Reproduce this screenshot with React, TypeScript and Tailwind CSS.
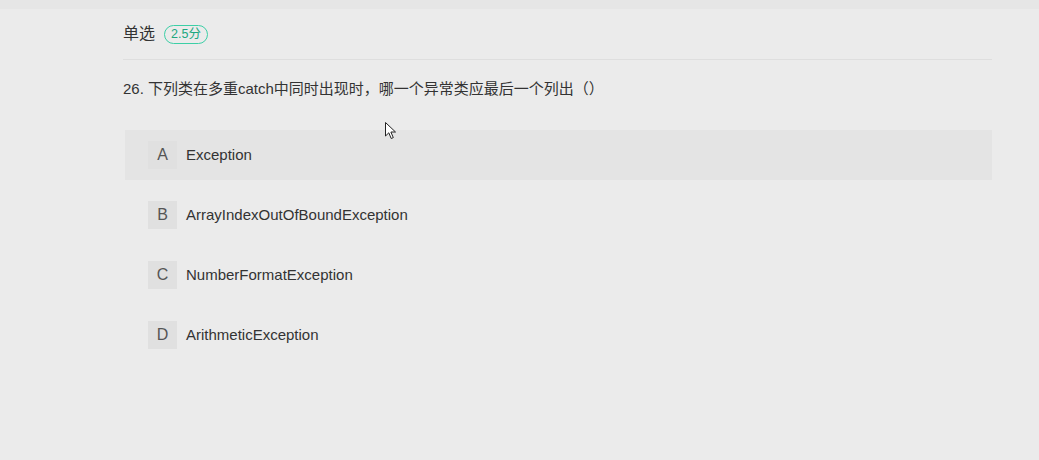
import React from 'react';

const options = [
  { key: 'A', text: 'Exception' },
  { key: 'B', text: 'ArrayIndexOutOfBoundException' },
  { key: 'C', text: 'NumberFormatException' },
  { key: 'D', text: 'ArithmeticException' },
];

const font = { fontFamily: 'Arial, "Liberation Sans", "Noto Sans CJK SC", sans-serif' };

const App: React.FC = () => {
  return (
    <div className="relative w-[1039px] h-[460px] bg-[#ebebeb] overflow-hidden" style={font}>
      {/* top strip */}
      <div className="h-[9px] bg-[#e6e6e6]" />

      <div className="pl-[123px] pr-[47px]">
        {/* header */}
        <div className="flex items-center gap-[9px] h-[51px] border-b border-[#dedede]">
          <span className="text-[16px] text-[#333]">单选</span>
          <span className="px-[6px] h-[19px] leading-[17px] rounded-full border border-[#3ccfa6] text-[12.5px] text-[#20a77f]">
            2.5分
          </span>
        </div>

        {/* question */}
        <div className="pt-[19px] text-[15px] text-[#333] leading-[20px]">
          26. 下列类在多重catch中同时出现时，哪一个异常类应最后一个列出（）
        </div>

        {/* options */}
        <div className="mt-[31px] ml-[2px] flex flex-col gap-[10px]">
          {options.map((o, i) => (
            <div
              key={o.key}
              className={`flex items-center h-[50px] pl-[23px] ${i === 0 ? 'bg-[#e4e4e4]' : ''}`}
            >
              <span className="w-[29px] h-[28px] flex items-center justify-center bg-[#e0e0e0] text-[16px] text-[#555]">
                {o.key}
              </span>
              <span className="ml-[9px] text-[15px] text-[#333]">{o.text}</span>
            </div>
          ))}
        </div>
      </div>

      {/* mouse cursor */}
      <svg className="absolute left-[385px] top-[122px]" width="12" height="18" viewBox="0 0 12 18">
        <path d="M0.5 0.5 L0.5 14 L3.8 10.8 L6.2 16.5 L8.3 15.6 L5.9 10 L10.5 10 Z" fill="#fff" stroke="#222" strokeWidth="1" />
      </svg>
    </div>
  );
};

export default App;
